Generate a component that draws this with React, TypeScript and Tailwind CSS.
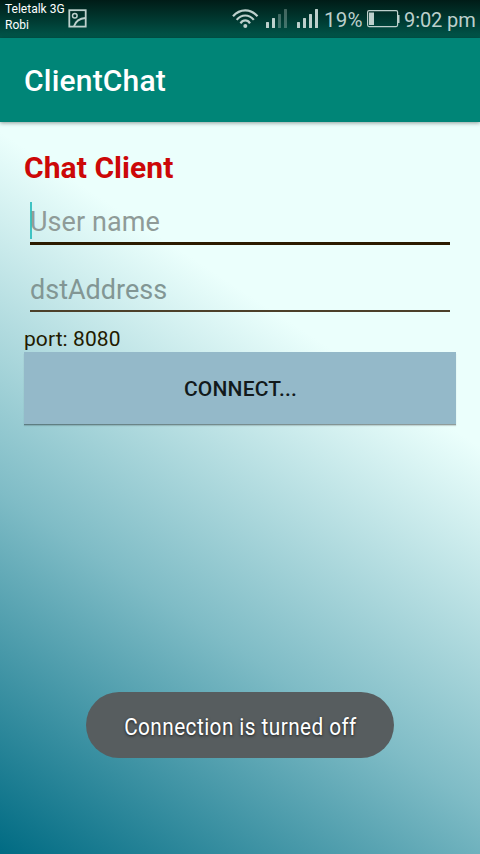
import React from "react";

const light = "#bdd0cc";

function PictureIcon() {
  return (
    <svg width="20" height="20" viewBox="0 0 20 20" fill="none" stroke={light} strokeWidth="1.8">
      <rect x="1.3" y="2.2" width="16.400" height="16.400" />
      <circle cx="6.800" cy="7.800" r="2.300" strokeWidth="1.5" />
      <path d="M6 18.300C7.500 13.500 11.500 10.300 17.500 10" />
    </svg>
  );
}

function WifiIcon() {
  return (
    <svg width="28" height="20" viewBox="0 0 28 20" fill="none" stroke={light} strokeWidth="2.200">
      <path d="M2 7.200C9 -0.700 19.500 -0.700 26.500 7.200" />
      <path d="M5.700 10.900C10.400 5 18.100 5 22.800 10.900" />
      <path d="M9.500 14.300C12.200 10.500 16.300 10.500 19 14.300" />
      <circle cx="14.300" cy="17" r="2" fill={light} stroke="none" />
    </svg>
  );
}

function SignalIcon({ level }: { level: number }) {
  const bars = [6, 10, 14, 19];
  return (
    <svg width="22" height="20" viewBox="0 0 22 20">
      {bars.map((h, i) => (
        <rect key={h} x={i * 6} y={19 - h} width="3" height={h} rx="0.5" fill={light} opacity={i < level ? 1 : 0.35} />
      ))}
    </svg>
  );
}

function BatteryIcon() {
  return (
    <svg width="33" height="18" viewBox="0 0 33 18" fill="none">
      <rect x="0.6" y="0.6" width="30" height="16" rx="1.5" stroke={light} strokeWidth="1.2" />
      <rect x="2" y="2.500" width="5" height="12.500" fill={light} />
      <rect x="31" y="5" width="1.500" height="8" fill={light} />
    </svg>
  );
}

function StatusBar() {
  return (
    <div className="flex h-[38px] shrink-0 bg-linear-to-b from-[#001c17] to-[#00574b] text-[#bdd0cc]">
      <div className="w-[68px] pl-[5px] pt-[1px] text-[12px] leading-[16px] whitespace-nowrap text-white">
        <div>Teletalk 3G</div>
        <div>Robi</div>
      </div>
      <div className="pt-[8px]"><PictureIcon /></div>
      <div className="ml-auto flex pr-[4px]">
        <div className="mr-[7px] pt-[9px]"><WifiIcon /></div>
        <div className="mr-[9px] pt-[9px]"><SignalIcon level={2} /></div>
        <div className="mr-[5px] pt-[9px]"><SignalIcon level={4} /></div>
        <div className="w-[43px] pt-[6px] text-[20.500px] tracking-[0.200px] leading-[28px] whitespace-nowrap">19%</div>
        <div className="w-[37px] pt-[10px]"><BatteryIcon /></div>
        <div className="w-[72px] pt-[6px] text-[20px] tracking-[-0.100px] leading-[28px] whitespace-nowrap">9:02 pm</div>
      </div>
    </div>
  );
}

export default function App() {
  return (
    <div className="relative flex h-[854px] w-[480px] flex-col overflow-hidden font-[Roboto,sans-serif]">
      <StatusBar />
      <header className="z-10 flex h-[84px] shrink-0 items-center bg-[#008577] pl-6 text-[30px] font-medium tracking-[0.200px] text-white shadow-[0_1px_4px_rgba(0,0,0,0.4)]">
        ClientChat
      </header>
      <main className="flex flex-1 flex-col bg-[linear-gradient(33.25deg,#006b83_0%,#7fbcc6_34.500%,#ebfffc_69%)] px-6 pt-[24px]">
        <h1 className="h-[44px] text-[30px] leading-[44px] font-bold tracking-[0.060px] text-[#cc0808]">Chat Client</h1>
        <div className="mx-[6px] mt-[10px] flex h-[45px] border-b-3 border-[#2b1b00]">
          <div className="mt-[2px] h-[37px] w-[2px] bg-[#3fc3c3]" />
          <div className="-ml-[2px] text-[27px] leading-[44px] tracking-[0.080px] text-[#8f9b98]">User name</div>
        </div>
        <div className="mx-[6px] mt-[23px] h-[44px] border-b-2 border-[#4c402a] text-[27px] leading-[44px] text-[#829694]">
          dstAddress
        </div>
        <div className="mt-[12px] h-[28px] text-[21px] leading-[31px] tracking-[0.080px] text-[#221a00]">port: 8080</div>
        <button className="h-[72px] shrink-0 bg-[#94b9c9] pt-[3px] pl-[1px] text-[21px] font-medium tracking-[0.200px] text-[#12191b] shadow-[0_1px_0_rgba(0,0,0,0.28),0_2px_1px_rgba(0,0,0,0.15)]">
          CONNECT...
        </button>
      </main>
      <div className="absolute left-[86px] top-[692px] flex h-[66px] w-[308px] items-center justify-center rounded-full bg-[#575d5f] pt-[3px]">
        <span className="inline-block origin-center scale-x-[0.865] text-[24px] tracking-[0.500px] whitespace-nowrap text-white [text-shadow:0_1px_3px_rgba(0,0,0,0.7)]">
          Connection is turned off
        </span>
      </div>
    </div>
  );
}
